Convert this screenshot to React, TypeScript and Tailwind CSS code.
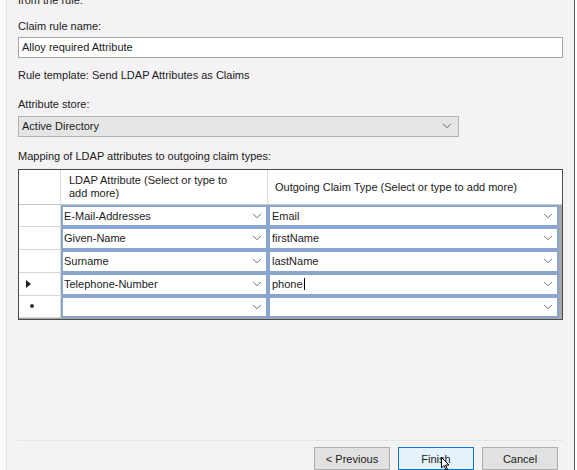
import React from "react";

function Chevron() {
  return (
    <svg width="10" height="6" viewBox="0 0 10 6" className="shrink-0">
      <path d="M1 0.8 L5 4.8 L9 0.8" stroke="#6f6f6f" strokeWidth="1" fill="none" />
    </svg>
  );
}

type Row = { a: string; b: string; mark?: "arrow" | "new"; caret?: boolean; h: string };

const rows: Row[] = [
  { a: "E-Mail-Addresses", b: "Email", h: "h-[22px]" },
  { a: "Given-Name", b: "firstName", h: "h-[23px]" },
  { a: "Surname", b: "lastName", h: "h-[23px]" },
  { a: "Telephone-Number", b: "phone", mark: "arrow", caret: true, h: "h-[23px]" },
  { a: "", b: "", mark: "new", h: "h-[22px]" },
];

export default function App() {
  return (
    <div className="w-[577px] h-[470px] overflow-hidden flex bg-[#f4f2f4] text-[11px] leading-[14px] text-[#1b1b1b] font-['Liberation_Sans',sans-serif]">
      <div className="w-[7px] shrink-0 bg-[#fafafa] border-r border-[#e4e4e4]" />
      <div className="flex-1 flex flex-col pl-[11px] pr-[11px]">
        <div className="mt-[-7px]">from the rule:</div>
        <div className="mt-[12px]">Claim rule name:</div>
        <div className="mt-[4px] h-[21px] bg-white border border-[#a5a5a5] flex items-center px-[3px]">
          Alloy required Attribute
        </div>
        <div className="mt-[10px]">Rule template: Send LDAP Attributes as Claims</div>
        <div className="mt-[15px]">Attribute store:</div>
        <div className="mt-[5px] w-[441px] h-[22px] bg-[#e6e5e6] border border-[#b3b3b3] flex items-center justify-between pl-[3px] pr-[6px]">
          <span>Active Directory</span>
          <Chevron />
        </div>
        <div className="mt-[12px]">Mapping of LDAP attributes to outgoing claim types:</div>
        <div className="mt-[6px] h-[155px] border border-[#4b4b4b] bg-[#a8a8a8] flex flex-col">
          <div className="h-[35px] flex bg-white border-b border-[#c8c8c8]">
            <div className="w-[42px] border-r border-[#dcdcdc]" />
            <div className="w-[207px] border-r border-[#dcdcdc] pl-[8px] flex items-center leading-[13px]">
              <span className="w-[172px]">LDAP Attribute (Select or type to add more)</span>
            </div>
            <div className="flex-1 pl-[7px] flex items-center">
              Outgoing Claim Type (Select or type to add more)
            </div>
          </div>
          {rows.map((r, i) => (
            <div key={i} className={`${r.h} flex`}>
              <div className="w-[42px] bg-white border-b border-r border-[#d6d6d6] flex items-center">
                {r.mark === "arrow" && (
                  <svg width="6" height="8" viewBox="0 0 6 8" className="ml-[7px]">
                    <path d="M0 0 L5 4 L0 8 Z" fill="#222" />
                  </svg>
                )}
                {r.mark === "new" && (
                  <span className="ml-[11px] w-[4px] h-[4px] rounded-full bg-[#333]" />
                )}
              </div>
              <div className="w-[207px] bg-white border-2 border-[#8ba6ce] flex items-center justify-between pl-[1px] pr-[4px]">
                <span>{r.a}</span>
                <Chevron />
              </div>
              <div className="w-[291px] bg-white border-2 border-[#8ba6ce] flex items-center justify-between pl-[2px] pr-[4px]">
                <span className="flex items-center">
                  {r.b}
                  {r.caret && <span className="inline-block w-px h-[12px] bg-black ml-[1px]" />}
                </span>
                <Chevron />
              </div>
            </div>
          ))}
        </div>
        <div className="mt-[120px] h-px bg-white border-t border-[#e6e4e6]" />
        <div className="mt-[6px] flex justify-end gap-[8px] pr-[5px]">
          <div className="w-[76px] h-[23px] bg-[#e1e1e1] border border-[#adadad] flex items-center justify-center">
            &lt; Previous
          </div>
          <div className="relative w-[76px] h-[23px] bg-[#e5f1fb] border border-[#0078d7] flex items-center justify-center">
            Finish
            <svg width="9" height="14" viewBox="0 0 9 14" className="absolute left-[42px] top-[9px]">
              <path d="M0.5 0.5 L0.5 11 L3 8.5 L5 13 L6.5 12.3 L4.6 8 L8 8 Z" fill="#fff" stroke="#000" strokeWidth="1" />
            </svg>
          </div>
          <div className="w-[76px] h-[23px] bg-[#e1e1e1] border border-[#adadad] flex items-center justify-center">
            Cancel
          </div>
        </div>
      </div>
      <div className="w-px shrink-0 bg-[#5a5a5a]" />
      <div className="w-[2px] shrink-0 bg-white" />
    </div>
  );
}
